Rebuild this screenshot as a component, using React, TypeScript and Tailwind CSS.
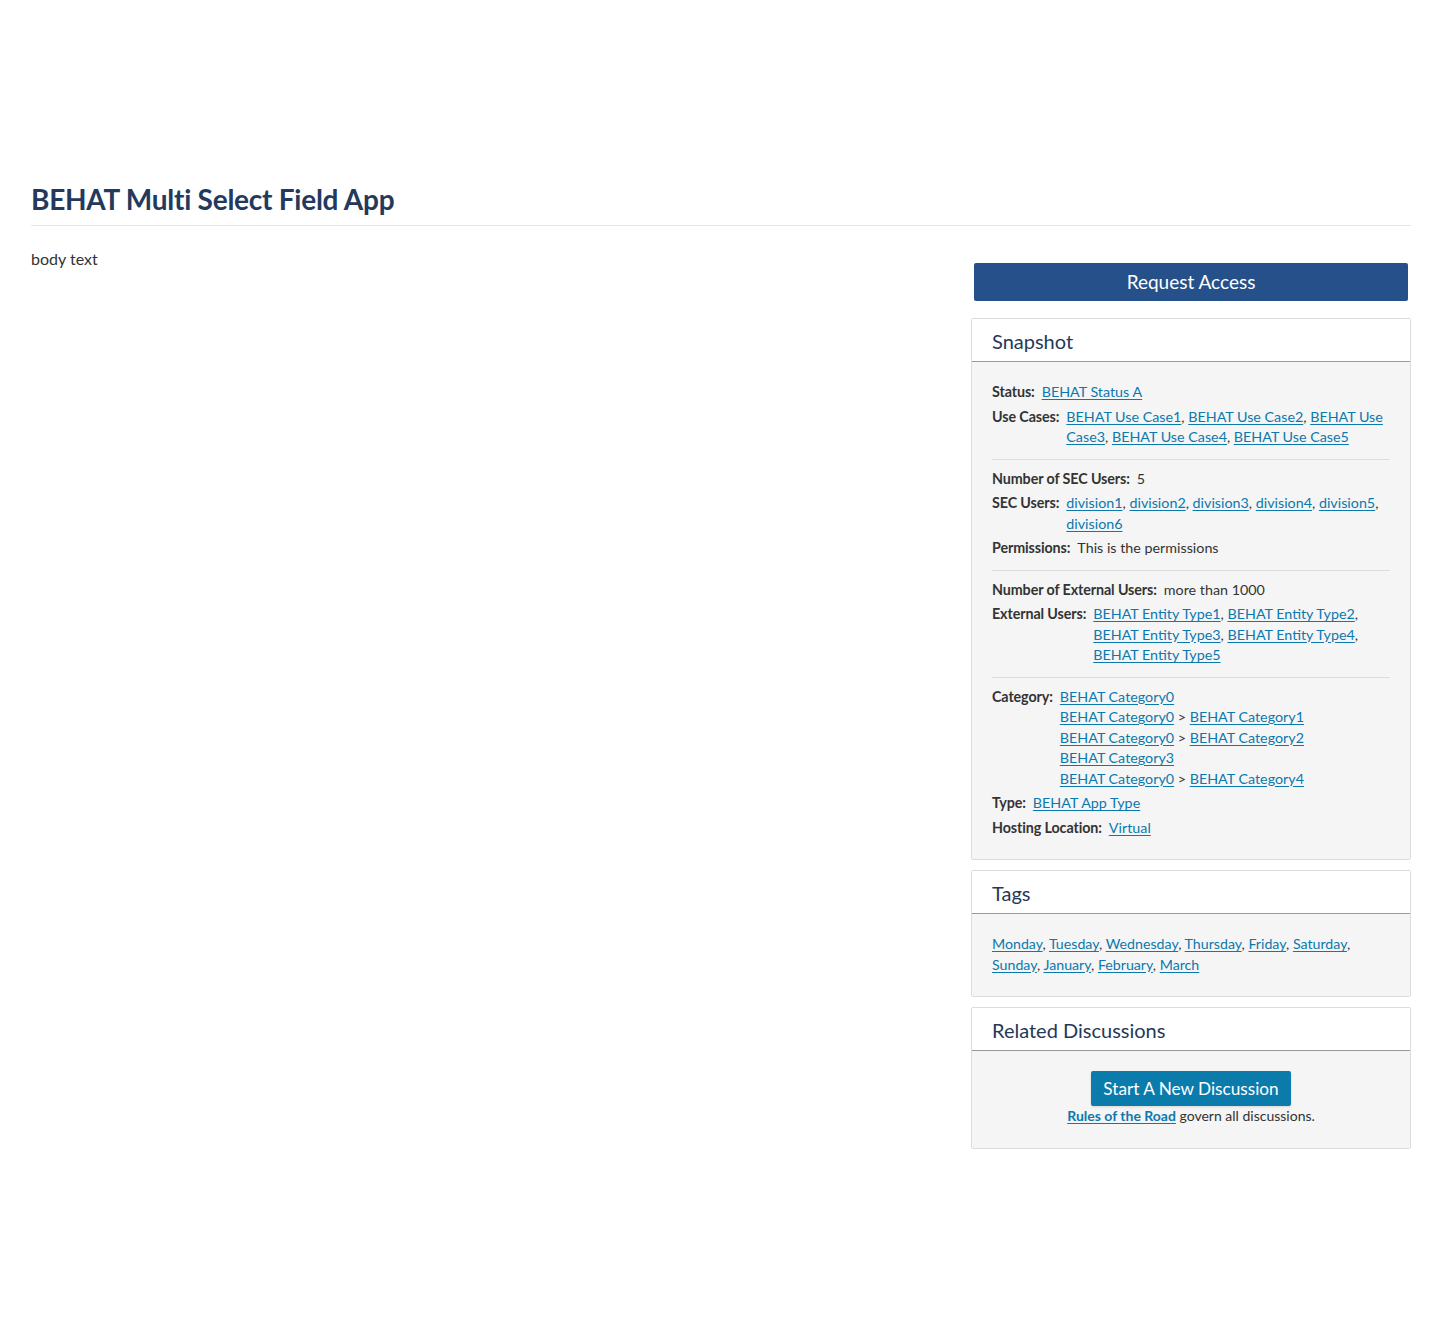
import React from "react";

const link = "text-[#0a79ae] underline underline-offset-2";

function Links({ items }: { items: string[] }) {
  return (
    <>
      {items.map((t, i) => (
        <span key={t}>
          <a href="#" className={link}>
            {t}
          </a>
          {i < items.length - 1 ? ", " : ""}
        </span>
      ))}
    </>
  );
}

function Row({ label, children }: { label: string; children: React.ReactNode }) {
  return (
    <div className="flex gap-[7px] mb-[4px] leading-[20.5px]">
      <span className="font-bold shrink-0 tracking-[-0.1px]">{label}</span>
      <div className="flex-1">{children}</div>
    </div>
  );
}

function Panel({ title, children, bodyClass }: { title: string; children: React.ReactNode; bodyClass: string }) {
  return (
    <section className="border border-[#dcdcdc] rounded-[2px]">
      <h2 className="h-[43px] px-[20px] flex items-center text-[20px] text-[#253858] bg-white border-b border-[#999] pt-[2px]">
        {title}
      </h2>
      <div className={"bg-[#f5f5f5] px-[20px] " + bodyClass}>{children}</div>
    </section>
  );
}

export default function App() {
  return (
    <div className="font-['Lato',sans-serif] text-[#333] min-h-[1329px] bg-white">
      <div className="px-[31px] pt-[180px]">
        <header className="border-b border-[#e6e6e6] pb-[7px]">
          <h1 className="text-[28px] font-bold text-[#233a5c] leading-[38px] tracking-[-0.25px]">
            BEHAT Multi Select Field App
          </h1>
        </header>
        <div className="grid grid-cols-[1fr_440px] gap-[30px] pt-[23px]">
          <div>
            <p className="text-[16px] leading-[20px]">body text</p>
          </div>
          <aside className="pt-[14px] flex flex-col">
            <button className="mx-[3px] h-[38px] bg-[#25508a] text-white text-[19px] rounded-[2px] mb-[17px]">
              Request Access
            </button>

            <Panel title="Snapshot" bodyClass="pt-[20px] pb-[17px] text-[14.3px]">
              <div className="border-b border-[#dddddd] pb-[7px] mb-[9px]">
                <Row label="Status:">
                  <a href="#" className={link}>BEHAT Status A</a>
                </Row>
                <Row label="Use Cases:">
                  <Links items={["BEHAT Use Case1", "BEHAT Use Case2", "BEHAT Use Case3", "BEHAT Use Case4", "BEHAT Use Case5"]} />
                </Row>
              </div>
              <div className="border-b border-[#dddddd] pb-[7px] mb-[9px]">
                <Row label="Number of SEC Users:">5</Row>
                <Row label="SEC Users:">
                  <Links items={["division1", "division2", "division3", "division4", "division5", "division6"]} />
                </Row>
                <Row label="Permissions:">This is the permissions</Row>
              </div>
              <div className="border-b border-[#dddddd] pb-[7px] mb-[9px]">
                <Row label="Number of External Users:">more than 1000</Row>
                <Row label="External Users:">
                  <Links items={["BEHAT Entity Type1", "BEHAT Entity Type2", "BEHAT Entity Type3", "BEHAT Entity Type4", "BEHAT Entity Type5"]} />
                </Row>
              </div>
              <Row label="Category:">
                <div><a href="#" className={link}>BEHAT Category0</a></div>
                <div><a href="#" className={link}>BEHAT Category0</a> &gt; <a href="#" className={link}>BEHAT Category1</a></div>
                <div><a href="#" className={link}>BEHAT Category0</a> &gt; <a href="#" className={link}>BEHAT Category2</a></div>
                <div><a href="#" className={link}>BEHAT Category3</a></div>
                <div><a href="#" className={link}>BEHAT Category0</a> &gt; <a href="#" className={link}>BEHAT Category4</a></div>
              </Row>
              <Row label="Type:">
                <a href="#" className={link}>BEHAT App Type</a>
              </Row>
              <Row label="Hosting Location:">
                <a href="#" className={link}>Virtual</a>
              </Row>
            </Panel>

            <div className="mt-[10px]">
              <Panel title="Tags" bodyClass="pt-[20px] pb-[21px] text-[14.2px] leading-[20.5px]">
                <Links items={["Monday", "Tuesday", "Wednesday", "Thursday", "Friday", "Saturday", "Sunday", "January", "February", "March"]} />
              </Panel>
            </div>

            <div className="mt-[10px]">
              <Panel title="Related Discussions" bodyClass="pt-[20px] pb-[22px] text-[14px] flex flex-col items-center">
                <button className="h-[35px] px-[12px] bg-[#0b7bab] text-white text-[17.2px] rounded-[2px] shadow-sm">
                  Start A New Discussion
                </button>
                <p className="leading-[20px]">
                  <a href="#" className={link + " font-bold"}>Rules of the Road</a> govern all discussions.
                </p>
              </Panel>
            </div>
          </aside>
        </div>
      </div>
    </div>
  );
}
